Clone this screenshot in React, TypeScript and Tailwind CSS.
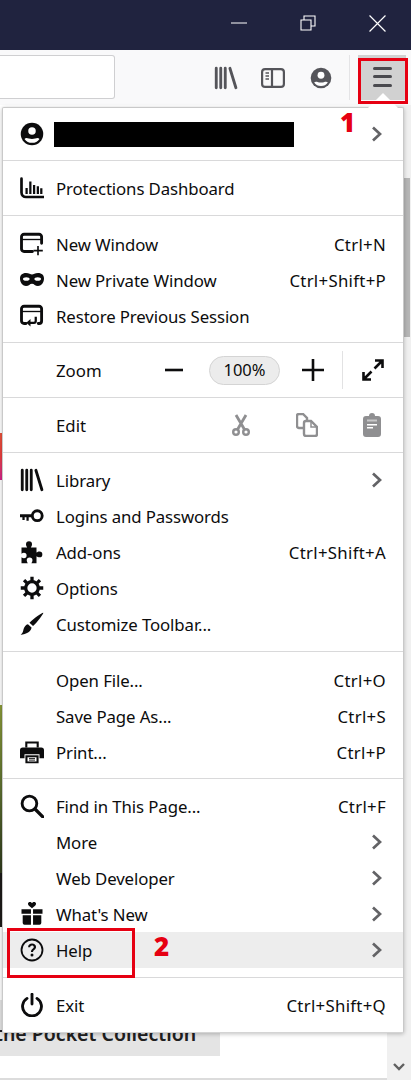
import React from "react"

type IconProps = { children: React.ReactNode; className?: string }

// firefox photon style icons are drawn on a 16 grid
const Icon = ({ children, className = "w-6 h-6 text-[#0c0c0d]" }: IconProps) => (
  <svg viewBox="0 0 16 16" className={`shrink-0 ${className}`} fill="currentColor">
    {children}
  </svg>
)

const AccountGlyph = () => (
  <>
    <circle cx="8" cy="8" r="7.5" />
    <circle cx="8" cy="6" r="2.500" fill="#fff" />
    <path d="M3 11.300C4.300 10 5.600 11.300 8 11.300s3.700-1.300 5-.0A6.200 6.200 0 0 1 8 13.900a6.200 6.200 0 0 1-5-2.600z" fill="#fff" />
  </>
)

const LibraryGlyph = () => (
  <path d="M1.500 1.500v13M4.500 1.500v13M7.500 1.500v13M10.600 1.500l4 13" fill="none" stroke="currentColor" strokeWidth="1.900" strokeLinecap="round" />
)

const ProtectionsIcon = () => (
  <Icon>
    <path d="M1 1.800V11a3 3 0 0 0 3 3h11.500" fill="none" stroke="currentColor" strokeWidth="1.800" strokeLinecap="round" />
    <path d="M4.400 8v4M6.900 3.600V12M9.400 6v6M11.900 6.800V12M14.200 8.200V12" fill="none" stroke="currentColor" strokeWidth="1.500" />
  </Icon>
)

const NewWindowIcon = () => (
  <Icon>
    <path d="M14.400 7.500V3.200A1.700 1.700 0 0 0 12.700 1.500H2.700A1.700 1.700 0 0 0 1 3.200v8.100A1.700 1.700 0 0 0 2.700 13h5.600" fill="none" stroke="currentColor" strokeWidth="1.900" strokeLinecap="round" />
    <path d="M1 5h13.400" stroke="currentColor" strokeWidth="0.900" />
    <path d="M12 9.300v6.200M9 12.400h6.200" stroke="currentColor" strokeWidth="1.100" />
  </Icon>
)

const MaskIcon = () => (
  <Icon>
    <path d="M4 3.400C6 3.400 7 4.400 8 4.400s2-1 4-1c2.600 0 4 1.500 4 3.600 0 3-2 5-4 5s-2.500-1.500-4-1.500S6 12 4 12 0 10 0 7c0-2.100 1.400-3.600 4-3.600z" />
    <ellipse cx="4.200" cy="7.300" rx="2.200" ry="1.200" fill="#fff" />
    <ellipse cx="11.800" cy="7.300" rx="2.200" ry="1.200" fill="#fff" />
  </Icon>
)

const RestoreIcon = () => (
  <Icon>
    <path d="M4 13H2.700A1.700 1.700 0 0 1 1 11.300V3.200A1.700 1.700 0 0 1 2.700 1.500h10A1.700 1.700 0 0 1 14.400 3.200v8.100A1.700 1.700 0 0 1 12.700 13h-.5" fill="none" stroke="currentColor" strokeWidth="1.900" strokeLinecap="round" />
    <path d="M1 5h13.400" stroke="currentColor" strokeWidth="0.900" />
    <path d="M10.500 8.500v2.800a1.200 1.200 0 0 1-1.200 1.200H6" fill="none" stroke="currentColor" strokeWidth="1.500" />
    <path d="M7 10l-2.800 2.500L7 15z" />
  </Icon>
)

const KeyIcon = () => (
  <Icon>
    <path d="M0 6.800h8.500v2.100H5.800v2.300H4.300V8.900H3.100v1.700H1.600V8.900H0z" />
    <circle cx="11.500" cy="7.800" r="3.300" fill="none" stroke="currentColor" strokeWidth="1.900" />
  </Icon>
)

const PuzzleIcon = () => (
  <Icon>
    <path d="M1 5h3.800C4.400 4.200 4 3.700 4 2.800a2 2 0 0 1 4 0c0 .9-.4 1.400-.8 2.200H11v3.400c.7-.4 1.200-.7 2-.7a1.900 1.900 0 0 1 0 3.800c-.8 0-1.300-.3-2-.7V15.500H7.600c.4-.7.700-1.200.7-2a1.900 1.900 0 0 0-3.800 0c0 .8.300 1.300.7 2H1v-4c.6.400 1 .6 1.600.6a1.800 1.800 0 0 0 0-3.600C2 8.500 1.600 8.700 1 9.100z" />
  </Icon>
)

const GearIcon = () => (
  <Icon>
    <path d="M8 .500v15M.500 8h15M2.700 2.700l10.600 10.600M13.300 2.700L2.700 13.300" stroke="currentColor" strokeWidth="2.200" />
    <circle cx="8" cy="8" r="4.200" fill="#fff" stroke="currentColor" strokeWidth="2.200" />
  </Icon>
)

const BrushIcon = () => (
  <Icon>
    <path d="M15.500.600c.3.300-3.500 5.600-6.800 8.800L6.300 7.200C9.600 3.900 15.100.2 15.500.600z" />
    <path d="M5.300 8.100l2.400 2.300c-.3 2.700-3.400 4.600-7.300 4.800 1.500-1 1.600-2.300 2-3.800.4-1.700 1.500-3 2.900-3.300z" />
  </Icon>
)

const PrintIcon = () => (
  <Icon>
    <path d="M3.500 1h9v4h-1.400V2.400H4.900V5H3.500z" />
    <path d="M1.800 5h12.400A1.800 1.800 0 0 1 16 6.800v5.400h-3V9.500H3v2.700H0V6.800A1.800 1.800 0 0 1 1.800 5z" />
    <path d="M3.600 10.200h8.800V15.500H3.600z" />
    <path d="M5 11.500h6v2.800H5z" fill="#fff" />
    <path d="M6 12.300h4M6 13.400h4" stroke="currentColor" strokeWidth="0.600" />
  </Icon>
)

const SearchIcon = () => (
  <Icon>
    <circle cx="6.300" cy="6.300" r="4.900" fill="none" stroke="currentColor" strokeWidth="1.900" />
    <path d="M10 10l5.200 5.200" stroke="currentColor" strokeWidth="2.200" strokeLinecap="round" />
  </Icon>
)

const GiftIcon = () => (
  <Icon>
    <path d="M8 4.200C6.600 3 5.300 2.300 5.300 1.200 5.300.4 6 0 6.600 0c.6 0 1.100.3 1.400.9.300-.6.800-.9 1.400-.9.600 0 1.300.4 1.300 1.200C10.700 2.300 9.400 3 8 4.200z" />
    <path d="M1 4.800h6.300v3H1zM8.700 4.800H15v3H8.700zM1.800 8.900h5.500v6.300H3a1.200 1.200 0 0 1-1.200-1.200zM8.700 8.900h5.500V14a1.200 1.200 0 0 1-1.200 1.200H8.700z" />
  </Icon>
)

const HelpIcon = () => (
  <Icon>
    <circle cx="8" cy="8" r="7" fill="none" stroke="currentColor" strokeWidth="1.200" />
    <path d="M5.400 6.100C5.400 4.600 6.600 3.700 8 3.700c1.500 0 2.700.9 2.700 2.300 0 1.700-2 1.900-2 3.400H7.300c0-2.200 1.900-2.300 1.900-3.400 0-.6-.5-1-1.200-1-.7 0-1.200.5-1.200 1.100z" />
    <circle cx="8" cy="11.400" r="1" />
  </Icon>
)

const PowerIcon = () => (
  <Icon>
    <path d="M4.700 3.600a6.300 6.300 0 1 0 6.600 0" fill="none" stroke="currentColor" strokeWidth="1.900" strokeLinecap="round" />
    <path d="M8 .800v6.600" stroke="currentColor" strokeWidth="1.900" strokeLinecap="round" />
  </Icon>
)

const Chevron = () => (
  <svg viewBox="0 0 11 16" className="w-[11px] h-4 shrink-0 mr-[4px] text-[#636366]" fill="none" stroke="currentColor" strokeWidth="2.700">
    <path d="M2 1.500L9 8l-7 6.500" />
  </svg>
)

type RowProps = {
  icon?: React.ReactNode
  label: string
  shortcut?: string
  arrow?: boolean
  active?: boolean
}

const Row = ({ icon, label, shortcut, arrow, active }: RowProps) => (
  <div className={`flex items-center h-9 pl-[17px] pr-[17px] ${active ? "bg-[#ededed]" : ""}`}>
    <span className="w-[36px] shrink-0 flex">{icon}</span>
    <span className="flex-1 whitespace-nowrap tracking-[-0.1px] relative top-px">{label}</span>
    {shortcut && <span className="whitespace-nowrap tracking-[0.3px] relative top-px">{shortcut}</span>}
    {arrow && <Chevron />}
  </div>
)

export default function App() {
  return (
    <div
      className="relative w-[411px] h-[1080px] overflow-hidden bg-white text-[#0c0c0d] flex flex-col"
      style={{ fontFamily: '"Noto Sans", "Open Sans", sans-serif' }}
    >
      {/* Title bar */}
      <div className="h-[50px] shrink-0 bg-[#20233f] flex items-center text-white">
        <svg viewBox="0 0 16 16" className="w-4 h-4 ml-[231px] mb-[4px]" fill="none" stroke="currentColor" strokeWidth="1">
          <path d="M0 8h16" />
        </svg>
        <svg viewBox="0 0 16 16" className="w-4 h-4 ml-[53px] mb-[4px]" fill="none" stroke="currentColor" strokeWidth="1.100">
          <path d="M1 5h10v10H1zM4 5V1h11v10h-4" />
        </svg>
        <svg viewBox="0 0 16 16" className="w-[17px] h-[17px] ml-[53px] mb-[4px]" fill="none" stroke="currentColor" strokeWidth="1.100">
          <path d="M.5.500l15 15M15.500.500l-15 15" />
        </svg>
      </div>

      {/* Toolbar */}
      <div className="h-[55px] shrink-0 bg-[#f9f9fa] flex items-center text-[#55555a]">
        <div className="w-[115px] h-[44px] mt-[-1px] bg-white border border-[#cfcfd1] rounded-r-[3px] border-l-0" />
        <Icon className="w-6 h-6 ml-[99px] text-[#55555a]">
          <LibraryGlyph />
        </Icon>
        <svg viewBox="0 0 24 20" className="w-6 h-5 ml-[23px]" fill="none" stroke="currentColor" strokeWidth="2.200">
          <rect x="1.100" y="1.100" width="21.800" height="17.800" rx="3" />
          <path d="M11 1v18" />
          <path d="M4.500 5h3.500M4.500 8h3.500M4.500 11h3.500" strokeWidth="1.500" />
        </svg>
        <Icon className="w-[22px] h-[22px] ml-[25px] text-[#55555a]">
          <AccountGlyph />
        </Icon>
        <div className="w-px h-[45px] ml-[17px] bg-[#e4e4e6]" />
        <div className="w-[48px] h-[45px] ml-[8px] bg-[#d1d1d1] flex flex-col items-center justify-center gap-[5.500px] pb-[2px]">
          <div className="w-[19px] h-[3px] rounded-full bg-[#4a4a4f]" />
          <div className="w-[19px] h-[3px] rounded-full bg-[#4a4a4f]" />
          <div className="w-[19px] h-[3px] rounded-full bg-[#4a4a4f]" />
        </div>
      </div>

      {/* Page behind the menu */}
      <div className="flex-1 flex min-h-0">
        <div className="flex-1 flex flex-col min-w-0">
          <div className="h-[328px]" />
          <div className="w-[3px] h-[47px] bg-gradient-to-b from-[#e8523a] via-[#ea3d3d] to-[#d4208c]" />
          <div className="h-[225px]" />
          <div className="w-[3px] h-[168px] bg-gradient-to-b from-[#8a9a38] via-[#5d7030] to-[#2f3a1c]" />
          <div className="w-[3px] h-[54px] bg-[#1c1a18]" />
          <div className="h-[73px]" />
          <div className="w-[220px] h-[56px] bg-[#e4e4e4] overflow-hidden">
            <div className="-ml-[5px] mt-[20px] text-[19.500px] leading-[28px] font-semibold whitespace-nowrap text-[#202020]">
              the Pocket Collection
            </div>
          </div>
          <div className="flex-1" />
          <div className="h-[2px] bg-[#dcdcdc]" />
        </div>
        <div className="w-[24px] bg-[#f0f0f0] flex flex-col items-end">
          <div className="h-[73px]" />
          <div className="w-[22px] h-[159px] mr-px bg-[#b6b6b6]" />
          <div className="flex-1" />
          <svg viewBox="0 0 12 8" className="w-3 h-2 mr-[6px] mb-[9px] text-[#606060]" fill="none" stroke="currentColor" strokeWidth="2.400">
            <path d="M1 1l5 5 5-5" />
          </svg>
        </div>
      </div>

      {/* Caret from the menu button */}
      <div className="absolute left-[368px] top-[93px] z-20 w-[30px] h-[15px] bg-white [clip-path:polygon(50%_0,100%_100%,0_100%)]" />

      {/* Hamburger menu */}
      <div className="absolute left-[2px] top-[107px] z-10 w-[402px] text-[16.800px] bg-white border border-[#c9c9c9] border-b-[#d4d4d4] rounded-[2px] shadow-[0_1px_4px_rgba(0,0,0,0.25)] divide-y divide-[#d9d9da]">
        <div className="h-[53px] flex items-center pl-[17px] pr-[17px]">
          <Icon className="w-6 h-6 text-[#0c0c0d]">
            <AccountGlyph />
          </Icon>
          <div className="w-[240px] h-[25px] ml-[10px] bg-black" />
          <div className="flex-1" />
          <Chevron />
        </div>

        <div className="py-[9px]">
          <Row icon={<ProtectionsIcon />} label="Protections Dashboard" />
        </div>

        <div className="pt-[10px] pb-[8px]">
          <Row icon={<NewWindowIcon />} label="New Window" shortcut="Ctrl+N" />
          <Row icon={<MaskIcon />} label="New Private Window" shortcut="Ctrl+Shift+P" />
          <Row icon={<RestoreIcon />} label="Restore Previous Session" />
        </div>

        <div className="h-[55px] flex items-center pl-[53px]">
          <span className="w-[109px] relative top-px">Zoom</span>
          <svg viewBox="0 0 18 4" className="w-[18px] h-1">
            <path d="M0 2h18" stroke="#0c0c0d" strokeWidth="2.600" />
          </svg>
          <div className="w-[71px] h-[29px] ml-[26px] rounded-full bg-[#ececec] border border-[#d4d4d4] flex items-center justify-center text-[16.500px]">
            100%
          </div>
          <svg viewBox="0 0 22 22" className="w-[22px] h-[22px] ml-[22px]">
            <path d="M0 11h22M11 0v22" stroke="#0c0c0d" strokeWidth="2.600" />
          </svg>
          <div className="w-px h-[38px] ml-[18px] bg-[#e2e2e3]" />
          <svg viewBox="0 0 22 22" className="w-[22px] h-[22px] ml-[19px]" fill="none" stroke="#0c0c0d" strokeWidth="2.600">
            <path d="M13 1.500h7.500V9M20 2l-7.500 7.500M9 20.500H1.500V13M2 20l7.500-7.500" />
          </svg>
        </div>

        <div className="h-[55px] flex items-center pl-[53px] text-[#8f8f91]">
          <span className="w-[176px] text-[#0c0c0d] relative top-px">Edit</span>
          <svg viewBox="0 0 18 22" className="w-[18px] h-[22px]" fill="none" stroke="currentColor" strokeWidth="2.400">
            <circle cx="4" cy="18" r="2.800" />
            <circle cx="14" cy="18" r="2.800" />
            <path d="M5.500 15.500L14 1M12.500 15.500L4 1" strokeWidth="2.800" />
          </svg>
          <svg viewBox="0 0 22 24" className="w-[22px] h-6 ml-[46px]" fill="none" stroke="currentColor" strokeWidth="2.400">
            <path d="M7 15H3a2 2 0 0 1-2-2V3a2 2 0 0 1 2-2h4l4 4v2" />
            <path d="M8 10a2 2 0 0 1 2-2h5l6 6v7a2 2 0 0 1-2 2h-9a2 2 0 0 1-2-2z" />
            <path d="M15 8v6h6" strokeWidth="1.500" />
          </svg>
          <svg viewBox="0 0 18 24" className="w-[18px] h-6 ml-[45px]" fill="currentColor">
            <path d="M6 3a3 3 0 0 1 6 0h3a3 3 0 0 1 3 3v15a3 3 0 0 1-3 3H3a3 3 0 0 1-3-3V6a3 3 0 0 1 3-3z" />
            <path d="M4 6.500h10v2H4z" fill="#fff" opacity="0.500" />
            <path d="M4 11h10v1.500H4zM4 14h6v1.500H4z" fill="#fff" />
          </svg>
        </div>

        <div className="py-[9px]">
          <Row
            icon={
              <Icon>
                <LibraryGlyph />
              </Icon>
            }
            label="Library"
            arrow
          />
          <Row icon={<KeyIcon />} label="Logins and Passwords" />
          <Row icon={<PuzzleIcon />} label="Add-ons" shortcut="Ctrl+Shift+A" />
          <Row icon={<GearIcon />} label="Options" />
          <Row icon={<BrushIcon />} label="Customize Toolbar..." />
        </div>

        <div className="pt-[10px] pb-[8px]">
          <Row label="Open File..." shortcut="Ctrl+O" />
          <Row label="Save Page As..." shortcut="Ctrl+S" />
          <Row icon={<PrintIcon />} label="Print..." shortcut="Ctrl+P" />
        </div>

        <div className="py-[9px]">
          <Row icon={<SearchIcon />} label="Find in This Page..." shortcut="Ctrl+F" />
          <Row label="More" arrow />
          <Row label="Web Developer" arrow />
          <Row icon={<GiftIcon />} label="What's New" arrow />
          <Row icon={<HelpIcon />} label="Help" arrow active />
        </div>

        <div className="py-[9px]">
          <Row icon={<PowerIcon />} label="Exit" shortcut="Ctrl+Shift+Q" />
        </div>
      </div>

      {/* Red annotations on the screenshot */}
      <div className="absolute left-[358px] top-[58px] z-30 w-[50px] h-[46px] border-[3px] border-[#e60012]" />
      <div className="absolute left-[7px] top-[928px] z-30 w-[128px] h-[50px] border-[3px] border-[#e60012]" />
      <div className="absolute left-[340px] top-[106px] z-30 text-[26px] leading-[32px] font-black text-[#e60012]">1</div>
      <div className="absolute left-[154px] top-[930px] z-30 text-[26px] leading-[32px] font-black text-[#e60012]">2</div>
    </div>
  )
}
